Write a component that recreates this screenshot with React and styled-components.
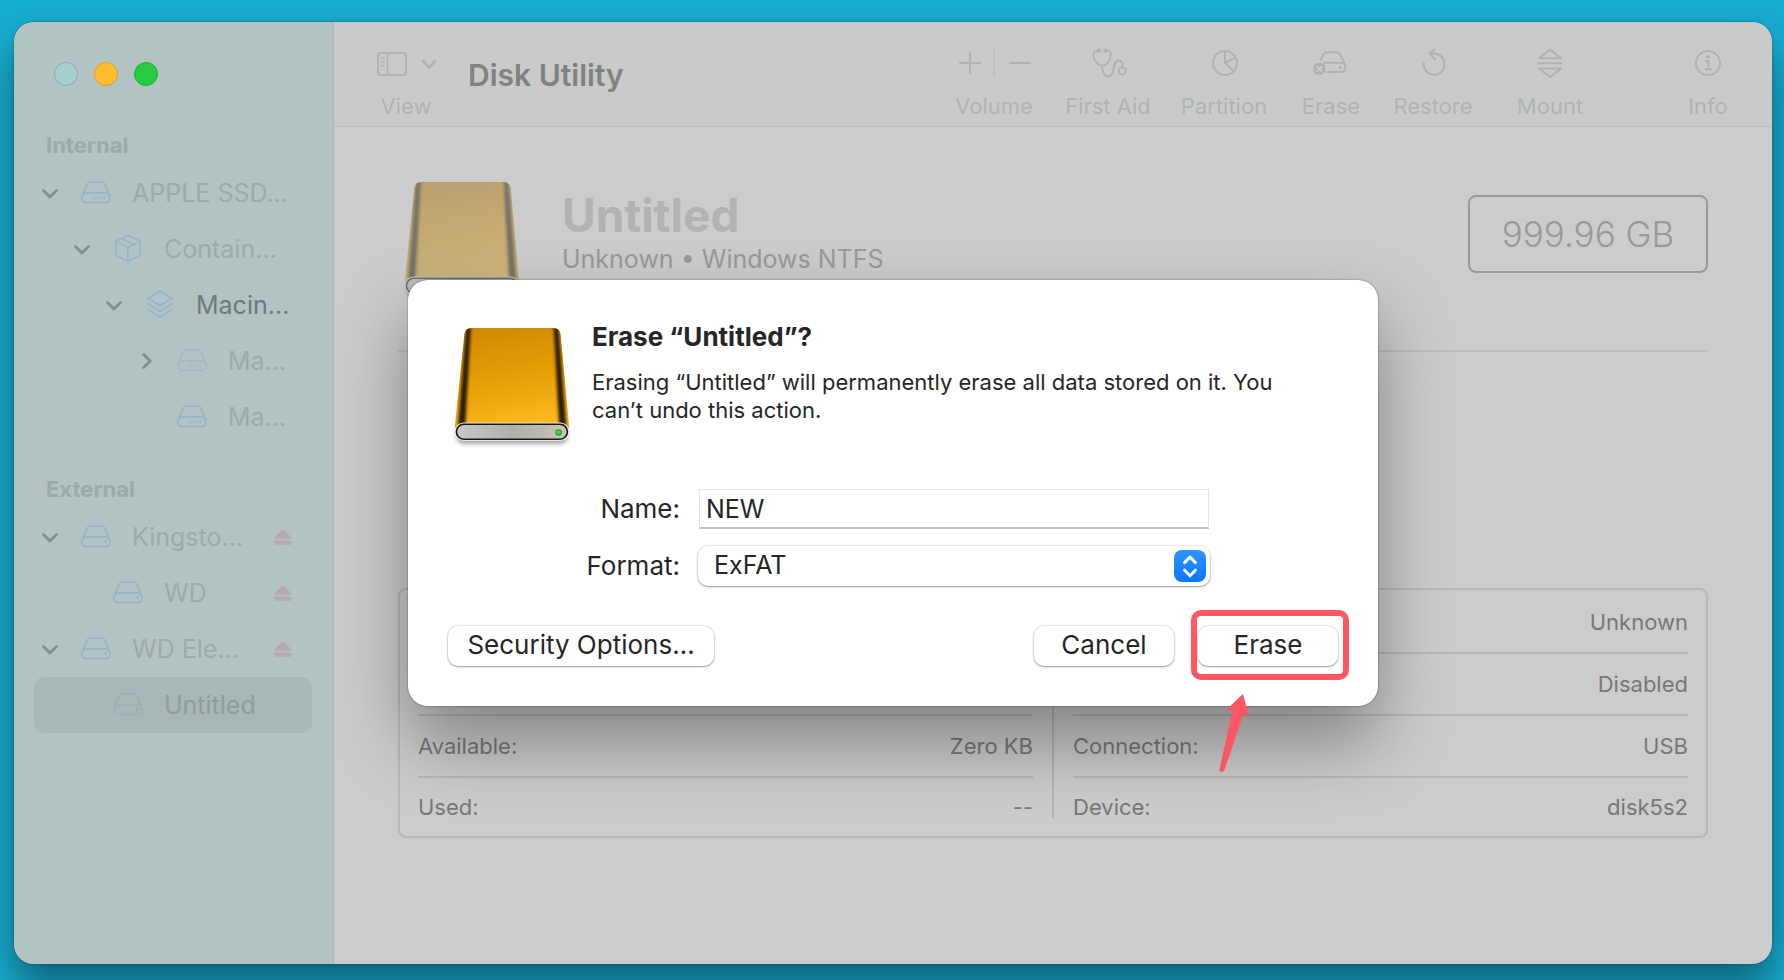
import React, { useState } from 'react';
import styled, { createGlobalStyle } from 'styled-components';

const GlobalStyle = createGlobalStyle`
    *{
        box-sizing: border-box;
    }
    body{
        margin: 0;
        font-family: Inter, "Liberation Sans", sans-serif;
        color: #262626;
    }
    button, input, select{
        font-family: inherit;
        color: inherit;
    }
    h1, h2, p, ul{
        margin: 0;
        padding: 0;
    }
`;

/* ---------- icons ---------- */

const Chevron = ({ open }) => (
    <svg width="18" height="18" viewBox="0 0 18 18" fill="none" stroke="currentColor" strokeWidth="2.8" strokeLinecap="round" strokeLinejoin="round">
        <path d={open ? 'M2.5 6.5L9 13L15.5 6.5' : 'M6.6 2.5L13.2 9L6.6 15.5'} />
    </svg>
);

const DiskIcon = ({ ssd, striped }) => (
    <svg width="30" height="24" viewBox="0 0 30 24" fill="none" stroke="currentColor" strokeWidth="1.8" strokeLinejoin="round">
        <path d="M1.6 14.4L6 3.4Q7 1.2 9.4 1.2H20.6Q23 1.2 24 3.4L28.4 14.4" />
        <rect x="1" y="12" width="28" height="9.4" rx="4.7" strokeDasharray={striped ? '3 1' : undefined} />
        {ssd ? (
            <path strokeWidth="1.3" opacity="0.85" d="M12.3 14.8V18.4M15.2 14.8V18.4M18.1 14.8V18.4M21 14.8V18.4M23.9 14.8V18.4" />
        ) : (
            <circle cx="24" cy="16.7" r="1.6" fill="currentColor" stroke="none" />
        )}
    </svg>
);

const BoxIcon = () => (
    <svg width="30" height="30" viewBox="0 0 30 30" fill="none" stroke="currentColor" strokeWidth="1.7" strokeLinejoin="round">
        <path d="M14.9 1.2L27 7V20.6Q27 21.4 26.2 21.8L14.9 27.2L3.6 21.8Q2.8 21.4 2.8 20.6V7Z" />
        <path d="M2.8 7.4L14.9 13.6L27 7.4M14.9 13.6V27.2M8.8 4.4L20.8 10.4" />
    </svg>
);

const LayersIcon = () => (
    <svg width="30" height="30" viewBox="0 0 30 30" fill="none" stroke="currentColor" strokeWidth="1.8" strokeLinejoin="round" strokeLinecap="round">
        <path d="M15 1.2L27 8.2L15 15.6L3 8.2Z" />
        <path d="M3 13.8L15 21.2L27 13.8M3 19.6L15 27.2L27 19.6" />
    </svg>
);

const EjectIcon = () => (
    <svg width="18" height="18" viewBox="0 0 18 18" fill="currentColor">
        <path d="M8.2 1.4Q9 .7 9.8 1.4L17 9Q17.8 10.6 16.4 10.7H1.6Q.2 10.6 1 9Z" />
        <rect x=".5" y="12.4" width="17" height="4.4" rx="1.2" />
    </svg>
);

const ViewIcon = () => (
    <svg width="60" height="32" viewBox="0 0 60 32" fill="none" stroke="currentColor" strokeWidth="2">
        <rect x="2" y="6" width="28" height="22" rx="3" />
        <path strokeWidth="1.6" d="M11.6 6V28M4.8 11.4H8.8M4.8 15H8.8M4.8 18.6H8.8" />
        <path d="M47 14L53 20.5L59 14" strokeWidth="2.8" strokeLinecap="round" strokeLinejoin="round" />
    </svg>
);

const VolumeIcon = () => (
    <svg width="76" height="32" viewBox="0 0 76 32" fill="none" stroke="currentColor" strokeWidth="2.2" strokeLinecap="round">
        <path d="M4 16H24M14 6V26M54 16H74" />
        <path d="M38 3V30" strokeWidth="1.4" stroke="#bcbebe" />
    </svg>
);

const FirstAidIcon = () => (
    <svg width="38" height="32" viewBox="0 0 38 32" fill="none" stroke="currentColor" strokeWidth="2" strokeLinecap="round">
        <path d="M9.6 3.6C6 3.2 4.2 5 4.4 8C4.8 13.6 8.6 18.6 13 18.6C17.6 18.6 21.4 13.6 21.8 8C22 5 20.2 3.2 16.6 3.6" />
        <circle cx="10" cy="3.8" r="1.2" fill="currentColor" />
        <circle cx="16.4" cy="3.8" r="1.2" fill="currentColor" />
        <path d="M13.4 18.6C13 25 15.4 29.4 19.4 29.4C27.4 29.4 22 13.6 29.6 13.4C32.6 13.4 33.6 16 33.6 19.6" />
        <circle cx="33.4" cy="23.8" r="3.6" />
    </svg>
);

const PartitionIcon = () => (
    <svg width="32" height="32" viewBox="0 0 32 32" fill="none" stroke="currentColor" strokeWidth="2">
        <circle cx="17" cy="16" r="12" />
        <path d="M17 4V16L25.8 24.4M17 16L27.4 10.4" />
    </svg>
);

const EraseIcon = () => (
    <svg width="36" height="32" viewBox="0 0 36 32" fill="none" stroke="currentColor" strokeWidth="2" strokeLinejoin="round">
        <path d="M7.4 13.4L10.4 7.2Q11.4 5.2 13.6 5.2H23.8Q26 5.2 27 7.2L31.4 15.8Q34.4 25 27.8 25H13.4" />
        <path d="M10.4 15.8H31" />
        <circle cx="27.2" cy="20.6" r="1.6" fill="currentColor" stroke="none" />
        <circle cx="6.4" cy="21.8" r="6.4" fill="currentColor" stroke="none" />
        <path d="M3.8 19.2L9 24.4M9 19.2L3.8 24.4" stroke="#c9cbca" />
    </svg>
);

const RestoreIcon = () => (
    <svg width="28" height="32" viewBox="0 0 28 32" fill="none" stroke="currentColor" strokeWidth="2.1" strokeLinecap="round" strokeLinejoin="round">
        <path d="M4.4 16.6A10.6 10.6 0 1 0 15 6.6H10.6M15.8 2.4L10.4 6.8L16 12.2" />
    </svg>
);

const MountIcon = () => (
    <svg width="28" height="32" viewBox="0 0 28 32" fill="none" stroke="currentColor" strokeWidth="2" strokeLinejoin="round" strokeLinecap="round">
        <path d="M3 11.2L14 2.6L25 11.2ZM3 21.4L14 30L25 21.4ZM2.6 16.3H25.4" />
    </svg>
);

const InfoIcon = () => (
    <svg width="32" height="32" viewBox="0 0 32 32" fill="none" stroke="currentColor" strokeWidth="2">
        <circle cx="16" cy="16" r="12" />
        <circle cx="15.8" cy="9.8" r="1.8" fill="currentColor" stroke="none" />
        <path d="M13 14.2H16.4V22M12.6 22.2H20" />
    </svg>
);

const StepperIcon = () => (
    <svg width="32" height="32" viewBox="0 0 32 32" fill="none" stroke="#fff" strokeWidth="3" strokeLinecap="round" strokeLinejoin="round">
        <path d="M10.6 12.6L16 7L21.4 12.6M10.6 20.2L16 25.8L21.4 20.2" />
    </svg>
);

const DriveArt = ({ id, className }) => (
    <svg className={className} width="120" height="124" viewBox="0 0 120 124">
        <defs>
            <linearGradient id={`${id}-body`} x1="0" y1="0" x2="0.2" y2="1">
                <stop offset="0" stopColor="#cc8500" />
                <stop offset="0.55" stopColor="#e69f06" />
                <stop offset="1" stopColor="#fdb91c" />
            </linearGradient>
            <linearGradient id={`${id}-front`} x1="0" y1="0" x2="1" y2="0">
                <stop offset="0" stopColor="#c9c9c9" />
                <stop offset="0.5" stopColor="#b3aea8" />
                <stop offset="1" stopColor="#c9c3b8" />
            </linearGradient>
            <clipPath id={`${id}-clip`}>
                <path d="M20 3H101Q107.6 3 108.6 9L117.4 104H2.6L12.4 9Q13.4 3 20 3Z" />
            </clipPath>
            <filter id={`${id}-soft`} x="-1" y="-0.2" width="3" height="1.4">
                <feGaussianBlur stdDeviation="1.7 0.6" />
            </filter>
            <filter id={`${id}-shade`} x="-0.1" y="-0.5" width="1.2" height="2">
                <feGaussianBlur stdDeviation="2" />
            </filter>
        </defs>
        <rect x="4" y="102" width="112" height="17" rx="8" fill="#000" opacity="0.35" filter={`url(#${id}-shade)`} />
        <g clipPath={`url(#${id}-clip)`}>
            <rect width="120" height="110" fill={`url(#${id}-body)`} />
            <path d="M14.4 0H19L13 106H5.6Z" fill="#2a1d00" filter={`url(#${id}-soft)`} />
            <path d="M101.6 0H106.2L114.8 106H107.4Z" fill="#2a1d00" filter={`url(#${id}-soft)`} />
        </g>
        <rect x="2.4" y="97.4" width="115.2" height="18.6" rx="9.3" fill="#e6e6e4" />
        <rect x="4.4" y="99.2" width="111" height="15" rx="7.5" fill={`url(#${id}-front)`} stroke="#161616" strokeWidth="1.6" />
        <circle cx="106.6" cy="107.4" r="3.2" fill="#2f8f35" />
        <circle cx="106.6" cy="107.4" r="2.2" fill="#35dd3d" />
    </svg>
);

/* ---------- data ---------- */

const internal = [
    { name: 'APPLE SSD...', depth: 0, icon: <DiskIcon ssd />, open: true },
    { name: 'Contain...', depth: 1, icon: <BoxIcon />, open: true },
    { name: 'Macin...', depth: 2, icon: <LayersIcon />, open: true, tone: '#6a7b7b' },
    { name: 'Ma...', depth: 3, icon: <DiskIcon ssd />, open: false, iconTone: '#a5b9c1' },
    { name: 'Ma...', depth: 3, icon: <DiskIcon ssd /> },
];

const external = [
    { name: 'Kingsto...', depth: 0, icon: <DiskIcon />, open: true, eject: true },
    { name: 'WD', depth: 1, icon: <DiskIcon />, eject: true },
    { name: 'WD Ele...', depth: 0, icon: <DiskIcon />, open: true, eject: true },
    { name: 'Untitled', depth: 1, icon: <DiskIcon striped />, selected: true, tone: '#8f9e9d', iconTone: '#9db0b6' },
];

const tools = [
    { label: 'Volume', width: 90, icon: <VolumeIcon /> },
    { label: 'First Aid', width: 90, icon: <FirstAidIcon /> },
    { label: 'Partition', width: 94, icon: <PartitionIcon /> },
    { label: 'Erase', width: 72, icon: <EraseIcon /> },
    { label: 'Restore', width: 84, icon: <RestoreIcon /> },
    { label: 'Mount', width: 102, icon: <MountIcon /> },
];

const leftDetails = [
    ['', ''],
    ['', ''],
    ['Available:', 'Zero KB'],
    ['Used:', '--'],
];

const rightDetails = [
    ['', 'Unknown'],
    ['', 'Disabled'],
    ['Connection:', 'USB'],
    ['Device:', 'disk5s2'],
];

/* ---------- parts ---------- */

const TreeGroup = ({ title, items }) => (
    <Group>
        <GroupTitle>{title}</GroupTitle>
        <ul>
            {items.map((item, i) => (
                <TreeRow key={i} $depth={item.depth} $selected={item.selected}>
                    <Disclosure>{item.open !== undefined && <Chevron open={item.open} />}</Disclosure>
                    <TreeIcon $tone={item.iconTone}>{item.icon}</TreeIcon>
                    <TreeName $tone={item.tone}>{item.name}</TreeName>
                    {item.eject && <Eject aria-label={`Eject ${item.name}`}><EjectIcon /></Eject>}
                </TreeRow>
            ))}
        </ul>
    </Group>
);

const Details = ({ rows }) => (
    <DetailTable>
        <tbody>
            {rows.map(([label, value], i) => (
                <tr key={i}>
                    <th scope="row">{label}</th>
                    <td>{value}</td>
                </tr>
            ))}
        </tbody>
    </DetailTable>
);

const EraseSheet = () => {
    const [name, setName] = useState('NEW');
    const [format, setFormat] = useState('ExFAT');

    return (
        <Sheet role="dialog" aria-labelledby="sheet-title">
            <SheetIntro>
                <SheetDrive id="sheet-drive" />
                <div>
                    <SheetTitle id="sheet-title">Erase “Untitled”?</SheetTitle>
                    <SheetText>Erasing “Untitled” will permanently erase all data stored on it. You can’t undo this action.</SheetText>
                </div>
            </SheetIntro>
            <Form>
                <label htmlFor="name">Name:</label>
                <TextField id="name" value={name} onChange={(e) => setName(e.target.value)} />
                <label htmlFor="format">Format:</label>
                <Popup>
                    <select id="format" value={format} onChange={(e) => setFormat(e.target.value)}>
                        <option>ExFAT</option>
                    </select>
                    <Stepper><StepperIcon /></Stepper>
                </Popup>
            </Form>
            <Actions>
                <PushButton $width={266}>Security Options...</PushButton>
                <Spacer />
                <PushButton $width={140}>Cancel</PushButton>
                <Marked>
                    <PushButton $width={140}>Erase</PushButton>
                    <Arrow width="32" height="80" viewBox="0 0 32 80">
                        <path d="M25 1L31.4 24.4L25.6 20.6L6.4 77.2Q4 80.6 1.2 77.4L14.6 17.4L7.6 17.6Z" fill="#fd5766" />
                    </Arrow>
                </Marked>
            </Actions>
        </Sheet>
    );
};

function App() {
    return (
        <Desktop>
            <GlobalStyle />
            <Window>
                <Sidebar>
                    <Lights>
                        <Light aria-label="Close" $fill="#a6cecd" $edge="#8babb0" />
                        <Light aria-label="Minimize" $fill="#ffbc2e" $edge="#e09f28" />
                        <Light aria-label="Zoom" $fill="#28ca41" $edge="#1fae33" />
                    </Lights>
                    <TreeGroup title="Internal" items={internal} />
                    <TreeGroup title="External" items={external} />
                </Sidebar>
                <Content>
                    <Toolbar>
                        <Tool $width={60}><ViewIcon />View</Tool>
                        <AppTitle>Disk Utility</AppTitle>
                        <ToolSet>
                            {tools.map((tool) => (
                                <Tool key={tool.label} $width={tool.width}>{tool.icon}{tool.label}</Tool>
                            ))}
                        </ToolSet>
                        <Tool $width={40}><InfoIcon />Info</Tool>
                    </Toolbar>
                    <Main>
                        <VolumeHeader>
                            <FadedDrive id="volume-drive" />
                            <VolumeInfo>
                                <h2>Untitled</h2>
                                <p>Unknown • Windows NTFS</p>
                            </VolumeInfo>
                            <Capacity>999.96 GB</Capacity>
                        </VolumeHeader>
                        <UsageArea />
                        <DetailPanel>
                            <Details rows={leftDetails} />
                            <DetailDivider />
                            <Details rows={rightDetails} />
                        </DetailPanel>
                    </Main>
                </Content>
                <SheetLayer>
                    <EraseSheet />
                </SheetLayer>
            </Window>
        </Desktop>
    );
}

/* ---------- styles ---------- */

const Desktop = styled.div`
    display: flex;
    min-height: 100vh;
    padding: 22px 12px 16px 14px;
    background: #17aed2;
    overflow: hidden;
`;

const Window = styled.div`
    position: relative;
    display: flex;
    flex: 1;
    min-width: 0;
    border-radius: 20px;
    background: #cccccc;
    box-shadow: 0 0 2px rgba(0,0,0,0.5), 0 24px 44px rgba(0,0,0,0.45);
`;

const Sidebar = styled.aside`
    flex: 0 0 320px;
    min-width: 0;
    padding-bottom: 24px;
    background: #b3c2c2;
    border-right: 1px solid #a9b5b6;
    border-radius: 20px 0 0 20px;
`;

const Lights = styled.div`
    display: flex;
    gap: 16px;
    padding: 40px 40px 39px;
`;

const Light = styled.button`
    width: 24px;
    height: 24px;
    padding: 0;
    border: 1px solid ${(p) => p.$edge};
    border-radius: 50%;
    background: ${(p) => p.$fill};
`;

const Group = styled.section`
    margin: 0 21px 24px 20px;
    ul{
        list-style: none;
    }
`;

const GroupTitle = styled.h2`
    padding-left: 12px;
    font-size: 22px;
    font-weight: 700;
    line-height: 40px;
    color: #9aabaa;
`;

const TreeRow = styled.li`
    display: flex;
    align-items: center;
    height: 56px;
    padding: 0 20px 0 ${(p) => 7 + p.$depth * 32}px;
    border-radius: 10px;
    background: ${(p) => (p.$selected ? '#a8b7b7' : 'transparent')};
`;

const Disclosure = styled.span`
    display: flex;
    flex: none;
    width: 40px;
    color: #7f8f90;
`;

const TreeIcon = styled.span`
    display: flex;
    flex: none;
    width: 51px;
    color: ${(p) => p.$tone || '#94b6ca'};
`;

const TreeName = styled.span`
    flex: 1;
    min-width: 0;
    font-size: 25px;
    line-height: 32px;
    white-space: nowrap;
    color: ${(p) => p.$tone || '#9aabaa'};
`;

const Eject = styled.button`
    display: flex;
    padding: 0;
    border: 0;
    background: none;
    color: #b4aaab;
`;

const Content = styled.div`
    flex: 1;
    min-width: 0;
`;

const Toolbar = styled.header`
    display: flex;
    height: 105px;
    padding: 25px 44px 0 42px;
    background: #c9cbca;
    border-bottom: 1px solid #b8bbbb;
    border-radius: 0 20px 0 0;
`;

const Tool = styled.button`
    display: flex;
    flex-direction: column;
    align-items: center;
    gap: 13px;
    width: ${(p) => p.$width}px;
    height: 73px;
    padding: 0;
    border: 0;
    background: none;
    font-size: 22px;
    line-height: 28px;
    white-space: nowrap;
    color: #b1b3b3;
    svg{
        flex: none;
    }
`;

const AppTitle = styled.h1`
    flex: 1;
    padding: 10px 0 0 32px;
    font-size: 30px;
    font-weight: 600;
    line-height: 36px;
    white-space: nowrap;
    color: #818282;
`;

const ToolSet = styled.div`
    display: flex;
    gap: 24px;
    margin-right: 87px;
`;

const Main = styled.main`
    padding: 52px 64px 32px;
`;

const VolumeHeader = styled.section`
    display: flex;
    align-items: flex-start;
    padding: 0 0 47px 4px;
    border-bottom: 2px solid #bebebe;
`;

const FadedDrive = styled(DriveArt)`
    flex: none;
    opacity: 0.5;
    filter: brightness(0.86) saturate(0.85);
`;

const VolumeInfo = styled.div`
    flex: 1;
    padding: 8px 0 0 40px;
    h2{
        font-size: 46px;
        font-weight: 700;
        line-height: 56px;
        color: #b2b2b2;
    }
    p{
        font-size: 25px;
        line-height: 32px;
        color: #999999;
    }
`;

const Capacity = styled.div`
    margin-top: 16px;
    width: 240px;
    border: 2px solid #999999;
    border-radius: 8px;
    font-size: 35px;
    font-weight: 300;
    line-height: 74px;
    text-align: center;
    color: #999999;
`;

const UsageArea = styled.div`
    height: 236px;
`;

const DetailPanel = styled.section`
    display: flex;
    padding: 2px 18px 0;
    border: 2px solid #b8b8b8;
    border-radius: 8px;
`;

const DetailDivider = styled.div`
    width: 2px;
    margin: 18px 19px;
    background: #b4b4b4;
`;

const DetailTable = styled.table`
    flex: 1;
    border-spacing: 0;
    font-size: 22px;
    color: #787878;
    th, td{
        height: 62px;
        padding: 0;
        border-bottom: 2px solid rgba(0,0,0,0.1);
        font-weight: 400;
        text-align: left;
    }
    td{
        text-align: right;
    }
    tr:last-child th, tr:last-child td{
        height: 58px;
        border-bottom: 0;
    }
`;

const SheetLayer = styled.div`
    position: absolute;
    inset: 0;
    display: flex;
    justify-content: center;
    align-items: flex-start;
    padding: 258px 24px 0;
    overflow: hidden;
    border-radius: 20px;
`;

const Sheet = styled.section`
    width: 970px;
    padding: 41px 40px 40px;
    border-radius: 20px;
    background: #ffffff;
    box-shadow: 0 0 2px rgba(0,0,0,0.5), 0 36px 72px rgba(0,0,0,0.36);
`;

const SheetIntro = styled.div`
    display: flex;
    padding: 0 40px 0 4px;
    gap: 20px;
`;

const SheetDrive = styled(DriveArt)`
    flex: none;
    margin-top: 4px;
`;

const SheetTitle = styled.h2`
    margin-bottom: 15px;
    font-size: 26px;
    font-weight: 700;
    line-height: 32px;
`;

const SheetText = styled.p`
    font-size: 22px;
    line-height: 28px;
`;

const Form = styled.div`
    display: grid;
    grid-template-columns: 232px minmax(0, 512px);
    gap: 17px 18px;
    align-items: center;
    margin: 40px 0;
    font-size: 26px;
    label{
        padding-bottom: 2px;
        text-align: right;
    }
`;

const TextField = styled.input`
    height: 40px;
    margin: 0 1px;
    padding: 0 6px;
    border: 1px solid #e4e4e4;
    border-bottom: 2px solid #c2c2c2;
    background: #ffffff;
    font-size: 25px;
    outline: none;
`;

const raised = `
    border: 0;
    border-radius: 10px;
    background: #ffffff;
    box-shadow: 0 0 1px 1px rgba(0,0,0,0.08), 0 1px 2px rgba(0,0,0,0.34);
`;

const Popup = styled.div`
    position: relative;
    select{
        ${raised}
        display: block;
        width: 100%;
        height: 40px;
        padding: 0 48px 2px 16px;
        appearance: none;
        font-size: 25px;
    }
`;

const Stepper = styled.span`
    position: absolute;
    top: 4px;
    right: 4px;
    display: flex;
    border-radius: 8px;
    background: linear-gradient(#2d93ff, #0a78fb);
    pointer-events: none;
`;

const Actions = styled.footer`
    display: flex;
    gap: 24px;
`;

const Spacer = styled.div`
    flex: 1;
`;

const PushButton = styled.button`
    ${raised}
    width: ${(p) => p.$width}px;
    height: 40px;
    padding: 0 0 2px;
    font-size: 26px;
    line-height: 32px;
    white-space: nowrap;
`;

const Marked = styled.div`
    position: relative;
    &::after{
        content: "";
        position: absolute;
        inset: -16px -11px -14px -7px;
        border: 6px solid #fd5766;
        border-radius: 10px;
        pointer-events: none;
    }
`;

const Arrow = styled.svg`
    position: absolute;
    top: 67px;
    left: 20px;
`;

export default App;
